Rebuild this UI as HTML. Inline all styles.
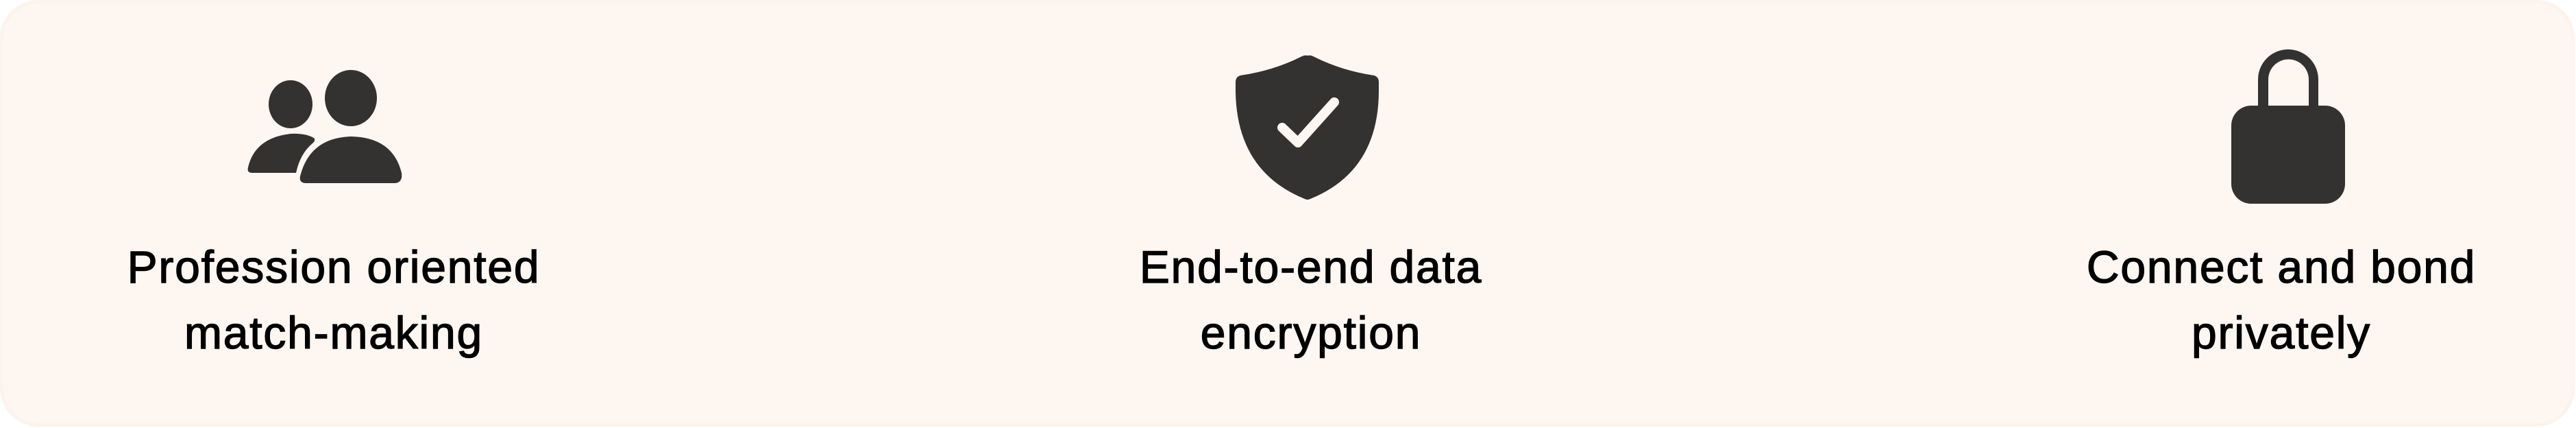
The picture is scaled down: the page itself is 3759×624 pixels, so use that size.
<!DOCTYPE html>
<html><head><meta charset="utf-8"><style>
html,body{margin:0;padding:0;background:#fff;}
body{width:3759px;height:624px;position:relative;overflow:hidden;}
.card{position:absolute;left:0;top:0;width:3757px;height:622px;border-radius:56px;background:#fdf6f1;box-shadow:inset 0 0 0 5px #fcf3ec;}
.t{position:absolute;width:1000px;text-align:center;font-family:"Liberation Sans",sans-serif;font-size:66px;line-height:96px;color:#000;-webkit-text-stroke:1.4px #000;letter-spacing:1.8px;}
svg{position:absolute;left:0;top:0;}
</style></head><body>
<div class="card"></div>
<svg width="3759" height="624" viewBox="0 0 3759 624">
<g fill="#343230">
<!-- people -->
<ellipse cx="424" cy="152" rx="32" ry="35"/>
<ellipse cx="512" cy="143" rx="38" ry="41"/>
<path d="M368 252 Q360 252 362 244 Q372 201 424 195 Q448 194 459 202 Q460 206 456 209 Q438 224 432 252 Z"/>
<path d="M447 267 Q436 267 438 257 Q452 201 512 199 Q573 200 586 252 Q588 267 575 267 Z"/>
<!-- shield -->
<path d="M1908 81 Q1913 80 1918 83 Q1958 103 2005 110 Q2012 112 2012 120 L2012 134 Q2011 250 1912 290 Q1908 292 1904 290 Q1805 250 1803 134 L1803 120 Q1803 112 1810 110 Q1858 103 1898 83 Q1903 80 1908 81 Z"/>
<!-- lock -->
<path d="M3295 154 L3295 116 A44 44 0 0 1 3383 116 L3383 154 L3369 154 L3369 116 A29.5 29.5 0 0 0 3310 116 L3310 154 Z"/>
<rect x="3256" y="154" width="166" height="143" rx="29"/>
</g>
<path d="M1871 186 L1894 208 L1947 149" fill="none" stroke="#fdf6f1" stroke-width="14" stroke-linecap="round" stroke-linejoin="round"/>
</svg>
<div class="t" style="left:-13px;top:341px;">Profession oriented<br>match-making</div>
<div class="t" style="left:1413px;top:341px;">End-to-end data<br>encryption</div>
<div class="t" style="left:2829px;top:341px;">Connect and bond<br>privately</div>
</body></html>
